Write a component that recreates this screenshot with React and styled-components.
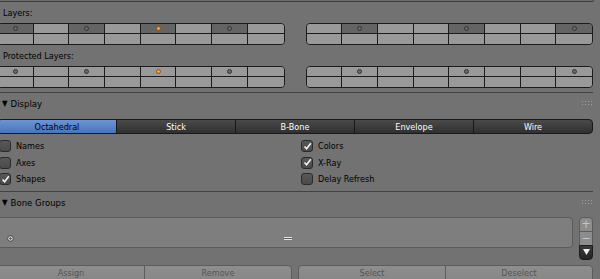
import React from "react";
import styled, { createGlobalStyle } from "styled-components";

const GlobalStyle = createGlobalStyle`
  html, body {
    margin: 0;
    padding: 0;
    background: #727272;
  }
  body {
    width: 600px;
    height: 279px;
    overflow: hidden;
    font-family: "DejaVu Sans Condensed", "DejaVu Sans", sans-serif;
    font-stretch: condensed;
    font-size: 9px;
    color: #000;
  }
`;

const Page = styled.div`
  width: 600px;
  height: 279px;
  overflow: hidden;
  background: #727272;
`;

const TopEdge = styled.div`
  width: 593px;
  height: 1px;
  background: #6c6c6c;
  border-bottom: 1px solid #3e3e3e;
  border-right: 1px solid #3e3e3e;
  border-bottom-right-radius: 3px;
`;

const Panel = styled.section`
  width: 596px;
  margin-left: -3px;
  padding-bottom: ${(p) => p.$pad}px;
  border-bottom: ${(p) => (p.$last ? "none" : "1px solid #424242")};
`;

const SectionLabel = styled.div`
  height: 21px;
  display: flex;
  align-items: center;
  padding-left: 6px;
`;

const LayerRow = styled.div`
  display: flex;
  gap: 21px;
`;

const LayerGroup = styled.div`
  width: 287px;
  height: 20px;
  border: 1px solid #1c1c1c;
  border-radius: 4px;
  overflow: hidden;
  display: grid;
  grid-template-columns: repeat(8, 1fr);
  grid-template-rows: 10px 10px;
`;

const LayerCell = styled.div`
  display: flex;
  align-items: center;
  justify-content: center;
  background: ${(p) => (p.$on ? "#646464" : "#999999")};
  border-right: ${(p) => (p.$last ? "none" : "1px solid #1c1c1c")};
  border-bottom: ${(p) => (p.$top ? "1px solid #1c1c1c" : "none")};
`;

const Dot = styled.span`
  width: 3px;
  height: 3px;
  border-radius: 50%;
  background: ${(p) => (p.$orange ? "#f4a43a" : "#6a6a6a")};
  border: 1px solid ${(p) => (p.$orange ? "#8a5418" : "#333")};
`;

const Header = styled.div`
  height: 21px;
  display: flex;
  align-items: center;
  justify-content: space-between;
  padding: 0 1px 0 5px;
  font-size: 9.5px;
`;

const HeaderTitle = styled.span`
  display: flex;
  align-items: center;
  gap: 3px;
`;

const Arrow = styled.span`
  font-size: 8px;
`;

const TabBar = styled.div`
  display: flex;
  margin-top: 5px;
`;

const Tab = styled.div`
  flex: 1;
  height: 13px;
  display: flex;
  align-items: center;
  justify-content: center;
  border: 1px solid #191919;
  margin-left: -1px;
  color: ${(p) => (p.$active ? "#000" : "#fff")};
  background: ${(p) =>
    p.$active
      ? "linear-gradient(#6c95d8, #4a74ba)"
      : "linear-gradient(#4a4a4a, #303030)"};
  &:first-child {
    margin-left: 0;
    border-radius: 4px 0 0 4px;
  }
  &:last-child {
    border-radius: 0 4px 4px 0;
  }
`;

const CheckGrid = styled.div`
  display: grid;
  grid-template-columns: 302px 1fr;
  grid-auto-flow: column;
  grid-template-rows: repeat(3, 16.5px);
  margin-top: 4px;
`;

const CheckRow = styled.label`
  display: flex;
  align-items: center;
  gap: 5px;
  padding-left: 2px;
`;

const Box = styled.span`
  width: 10px;
  height: 10px;
  border: 1px solid #2a2a2a;
  border-radius: 3px;
  background: linear-gradient(#585858, #4a4a4a);
  display: flex;
  align-items: center;
  justify-content: center;
`;

const ListRow = styled.div`
  display: flex;
  gap: 6px;
  margin-top: 4px;
  align-items: flex-start;
`;

const ListBox = styled.div`
  flex: 1;
  height: 24px;
  border: 1px solid #5a5a5a;
  border-radius: 4px;
  background: #7e7e7e;
  display: flex;
  align-items: flex-end;
  padding: 0 0 5px 9px;
`;

const ListFooter = styled.div`
  display: flex;
  align-items: center;
  justify-content: space-between;
  width: 285px;
`;

const Grip = styled.span`
  width: 8px;
  height: 3px;
  border-top: 1px solid #e4e4e4;
  border-bottom: 1px solid #e4e4e4;
  box-sizing: border-box;
  background: #5a5a5a;
`;

const SideColumn = styled.div`
  width: 14px;
  display: flex;
  flex-direction: column;
`;

const SideButton = styled.div`
  height: 13px;
  border: 1px solid #5a5a5a;
  margin-top: -1px;
  background: ${(p) => (p.$dark ? "linear-gradient(#3a3a3a, #262626)" : "#8c8c8c")};
  color: ${(p) => (p.$dark ? "#fff" : "#c6c6c6")};
  display: flex;
  align-items: center;
  justify-content: center;
  font-size: 12px;
  line-height: 1;
  &:first-child {
    margin-top: 0;
    border-radius: 4px 4px 0 0;
  }
  &:last-child {
    border-radius: 0 0 4px 4px;
    border-color: #1c1c1c;
  }
`;

const ButtonRow = styled.div`
  display: flex;
  gap: 6px;
  margin-top: 5px;
`;

const ButtonPair = styled.div`
  flex: 1;
  display: flex;
`;

const Button = styled.div`
  flex: 1;
  height: 15px;
  display: flex;
  align-items: center;
  justify-content: center;
  border: 1px solid #5c5c5c;
  margin-left: -1px;
  background: linear-gradient(#8e8e8e, #868686);
  color: #555;
  &:first-child {
    margin-left: 0;
    border-radius: 4px 0 0 0;
  }
  &:last-child {
    border-radius: 0 4px 0 0;
  }
`;

const DragHandle = () => (
  <svg width="10" height="5" viewBox="0 0 10 5">
    {[0, 3, 6, 9].map((x) =>
      [0, 3].map((y) => (
        <rect key={`${x}-${y}`} x={x} y={y} width="1" height="1" fill="#a0a0a0" />
      ))
    )}
  </svg>
);

const Check = () => (
  <svg width="9" height="9" viewBox="0 0 9 9">
    <path d="M1.5 4.5 L3.6 6.8 L7.8 1.2" fill="none" stroke="#f2f2f2" strokeWidth="1.6" />
  </svg>
);

const FilterIcon = () => (
  <svg width="7" height="7" viewBox="0 0 7 7">
    <circle cx="3.5" cy="3.5" r="2.8" fill="#d8d8d8" stroke="#3a3a3a" strokeWidth="0.9" />
    <path d="M2.2 3.5 H4.8 M3.5 2.2 V4.8" stroke="#3a3a3a" strokeWidth="0.8" />
  </svg>
);

const Layers = ({ active, dots, orange }) => (
  <LayerGroup>
    {Array.from({ length: 8 }).map((_, i) => (
      <LayerCell key={`t${i}`} $top $on={active.includes(i)} $last={i === 7}>
        {dots.includes(i) && <Dot $orange={orange === i} />}
      </LayerCell>
    ))}
    {Array.from({ length: 8 }).map((_, i) => (
      <LayerCell key={`b${i}`} $last={i === 7} />
    ))}
  </LayerGroup>
);

const CheckItem = ({ label, checked }) => (
  <CheckRow>
    <Box>{checked && <Check />}</Box>
    {label}
  </CheckRow>
);

const tabs = ["Octahedral", "Stick", "B-Bone", "Envelope", "Wire"];

export default function App() {
  return (
    <Page>
      <GlobalStyle />
      <TopEdge />
      <Panel $pad={4}>
        <SectionLabel>Layers:</SectionLabel>
        <LayerRow>
          <Layers active={[0, 2, 4, 6]} dots={[0, 2, 4, 6]} orange={4} />
          <Layers active={[1, 4, 7]} dots={[1, 4, 7]} />
        </LayerRow>
        <SectionLabel>Protected Layers:</SectionLabel>
        <LayerRow>
          <Layers active={[]} dots={[0, 2, 4, 6]} orange={4} />
          <Layers active={[]} dots={[1, 4, 7]} />
        </LayerRow>
      </Panel>

      <Panel $pad={3}>
        <Header>
          <HeaderTitle>
            <Arrow>▼</Arrow> Display
          </HeaderTitle>
          <DragHandle />
        </Header>
        <TabBar>
          {tabs.map((t, i) => (
            <Tab key={t} $active={i === 0}>
              {t}
            </Tab>
          ))}
        </TabBar>
        <CheckGrid>
          <CheckItem label="Names" />
          <CheckItem label="Axes" />
          <CheckItem label="Shapes" checked />
          <CheckItem label="Colors" checked />
          <CheckItem label="X-Ray" checked />
          <CheckItem label="Delay Refresh" />
        </CheckGrid>
      </Panel>

      <Panel $pad={0} $last>
        <Header>
          <HeaderTitle>
            <Arrow>▼</Arrow> Bone Groups
          </HeaderTitle>
          <DragHandle />
        </Header>
        <ListRow>
          <ListBox>
            <ListFooter>
              <FilterIcon />
              <Grip />
            </ListFooter>
          </ListBox>
          <SideColumn>
            <SideButton>+</SideButton>
            <SideButton>−</SideButton>
            <SideButton $dark>
              <svg width="7" height="6" viewBox="0 0 7 6">
                <path d="M0 0 H7 L3.5 6 Z" fill="#f0f0f0" />
              </svg>
            </SideButton>
          </SideColumn>
        </ListRow>
        <ButtonRow>
          <ButtonPair>
            <Button>Assign</Button>
            <Button>Remove</Button>
          </ButtonPair>
          <ButtonPair>
            <Button>Select</Button>
            <Button>Deselect</Button>
          </ButtonPair>
        </ButtonRow>
      </Panel>
    </Page>
  );
}
